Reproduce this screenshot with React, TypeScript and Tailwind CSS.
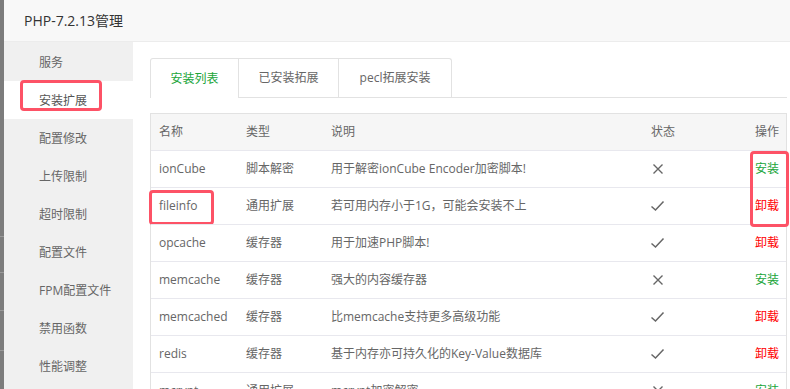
import React from "react";

type Ext = {
  name: string;
  type: string;
  desc: string;
  installed: boolean;
};

const exts: Ext[] = [
  { name: "ionCube", type: "脚本解密", desc: "用于解密ionCube Encoder加密脚本!", installed: false },
  { name: "fileinfo", type: "通用扩展", desc: "若可用内存小于1G，可能会安装不上", installed: true },
  { name: "opcache", type: "缓存器", desc: "用于加速PHP脚本!", installed: true },
  { name: "memcache", type: "缓存器", desc: "强大的内容缓存器", installed: false },
  { name: "memcached", type: "缓存器", desc: "比memcache支持更多高级功能", installed: true },
  { name: "redis", type: "缓存器", desc: "基于内存亦可持久化的Key-Value数据库", installed: true },
  { name: "mcrypt", type: "通用扩展", desc: "mcrypt加密解密", installed: false },
];

const menu = ["服务", "安装扩展", "配置修改", "上传限制", "超时限制", "配置文件", "FPM配置文件", "禁用函数", "性能调整"];

function CrossIcon() {
  return (
    <svg width="12" height="12" viewBox="0 0 12 12" className="ml-[1px]">
      <path d="M1.5 1.5 L10.5 10.5 M10.5 1.5 L1.5 10.5" stroke="#666" strokeWidth="1.4" fill="none" />
    </svg>
  );
}

function CheckIcon() {
  return (
    <svg width="15" height="12" viewBox="0 0 15 12" className="ml-[-1px]">
      <path d="M1.5 6.5 L5.5 10 L13.5 1.5" stroke="#666" strokeWidth="1.5" fill="none" />
    </svg>
  );
}

export default function App() {
  return (
    <div
      className="flex h-[389px] w-[790px] overflow-hidden bg-white text-[#555]"
      style={{ fontFamily: '"Open Sans", "Noto Sans CJK SC", sans-serif' }}
    >
      {/* page behind the dialog */}
      <div className="flex w-[4px] shrink-0 flex-col bg-[#7c7c7c]">
        <div className="h-[236px] shrink-0" />
        <div className="h-[36px] shrink-0 border-t border-[#999]" />
        <div className="h-[38px] shrink-0 border-t border-[#999]" />
        <div className="h-[40px] shrink-0 border-t border-[#999]" />
        <div className="flex-1 border-t border-[#999]" />
      </div>

      <div className="flex min-h-0 flex-1 flex-col">
        <div className="flex h-[42px] shrink-0 items-center border-b border-[#ececec] bg-[#f8f8f8] pl-[20px] text-[14px] text-[#333]">
          PHP-7.2.13管理
        </div>

        <div className="flex min-h-0 flex-1">
          <div className="w-[129px] shrink-0 bg-[#f0f0f0] pt-[1px]">
            {menu.map((m, i) => (
              <div
                key={m}
                className={
                  "relative flex h-[38px] items-center pl-[35px] pt-[2px] text-[12px] " +
                  (i === 1 ? "bg-white text-[#555]" : "text-[#666]")
                }
              >
                {m}
                {i === 1 && (
                  <div className="absolute left-[16px] top-[-1px] h-[31px] w-[82px] rounded-[4px] border-[3px] border-[#fd5266]" />
                )}
              </div>
            ))}
          </div>

          <div className="min-w-0 flex-1 pl-[17px] pr-[3px] pt-[16px]">
            <div className="flex h-[40px] border-b border-[#e2e2e2] text-[12px]">
              <div className="flex h-[40px] w-[89px] items-center justify-center rounded-tl-[3px] border-l border-r border-t border-[#e2e2e2] bg-white text-[#20a53a]">
                安装列表
              </div>
              <div className="flex h-[39px] w-[100px] items-center justify-center border-r border-t border-[#e2e2e2] text-[#666]">
                已安装拓展
              </div>
              <div className="flex h-[39px] w-[113px] items-center justify-center rounded-tr-[3px] border-r border-t border-[#e2e2e2] text-[#666]">
                pecl拓展安装
              </div>
            </div>

            <div className="relative mt-[15px] border border-[#e2e2e2] text-[12px] text-[#666]">
              <div className="flex h-[36px] items-center bg-[#f6f6f6]">
                <div className="w-[87px] pl-[8px]">名称</div>
                <div className="w-[85px] pl-[8px]">类型</div>
                <div className="w-[320px] pl-[8px]">说明</div>
                <div className="w-[98px] pl-[8px]">状态</div>
                <div className="flex-1 pr-[7px] text-right">操作</div>
              </div>
              {exts.map((e, i) => (
                <div key={e.name} className="relative flex h-[37px] items-center border-t border-[#e8e8ee]">
                  <div className="w-[87px] pl-[8px]">{e.name}</div>
                  <div className="w-[85px] pl-[8px]">{e.type}</div>
                  <div className="w-[320px] pl-[8px]">{e.desc}</div>
                  <div className="flex w-[98px] items-center pl-[8px]">
                    {e.installed ? <CheckIcon /> : <CrossIcon />}
                  </div>
                  <div className={"flex-1 pr-[7px] text-right " + (e.installed ? "text-[#ff0000]" : "text-[#20a53a]")}>
                    {e.installed ? "卸载" : "安装"}
                  </div>
                  {i === 1 && (
                    <div className="absolute left-[-2px] top-[2px] h-[35px] w-[65px] rounded-[4px] border-[3px] border-[#fd5266]" />
                  )}
                </div>
              ))}
              <div className="absolute right-[-3px] top-[37px] h-[76px] w-[39px] rounded-[4px] border-[3px] border-[#fd5266]" />
            </div>
          </div>
        </div>
      </div>
    </div>
  );
}
